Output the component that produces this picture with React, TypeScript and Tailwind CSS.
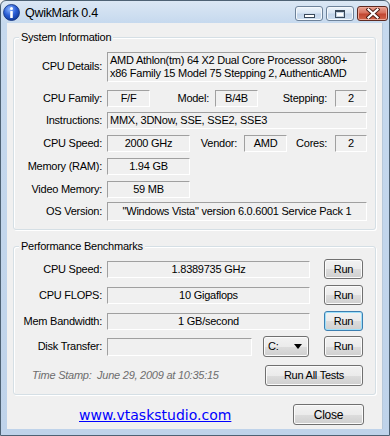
import type { ReactNode } from 'react';

const box =
  'border border-t-[#a0a0a0] border-l-[#a0a0a0] border-r-white border-b-white bg-[#f0f0f0] flex items-center whitespace-nowrap overflow-hidden shrink-0';

function Field({ className, children, left }: { className: string; children?: ReactNode; left?: boolean }) {
  return (
    <div className={`${box} ${left ? 'justify-start pl-[2px]' : 'justify-center'} ${className}`}>
      {children}
    </div>
  );
}

function Label({ className, children }: { className: string; children: ReactNode }) {
  return <div className={`text-right shrink-0 whitespace-nowrap ${className}`}>{children}</div>;
}

function Btn({ className, focused, children }: { className: string; focused?: boolean; children: ReactNode }) {
  return (
    <button
      className={`flex items-center justify-center shrink-0 rounded-[3px] border text-black bg-[linear-gradient(#f2f2f2_0%,#ebebeb_50%,#dddddd_50%,#cfcfcf_100%)] ${
        focused
          ? 'border-[#3c7fb1] shadow-[inset_0_0_0_1px_#9ee0fa]'
          : 'border-[#707070] shadow-[inset_0_0_0_1px_#fbfbfb]'
      } ${className}`}
    >
      {children}
    </button>
  );
}

function Group({ title, className, children }: { title: string; className: string; children: ReactNode }) {
  return (
    <div
      className={`relative ml-[6px] w-[363px] rounded-[3px] border border-[#d5dfe5] shadow-[inset_1px_1px_0_#ffffff,1px_1px_0_#ffffff] ${className}`}
    >
      <span className="absolute -top-[8px] left-[5px] bg-[#f0f0f0] px-[2px] leading-[14px] text-black">{title}</span>
      {children}
    </div>
  );
}

function InfoIcon() {
  return (
    <svg width="17" height="17" viewBox="0 0 17 17">
      <defs>
        <radialGradient id="ig" cx="40%" cy="30%" r="70%">
          <stop offset="0%" stopColor="#8fb8ff" />
          <stop offset="55%" stopColor="#2c5fd6" />
          <stop offset="100%" stopColor="#123c9c" />
        </radialGradient>
      </defs>
      <circle cx="8.5" cy="8.5" r="8" fill="url(#ig)" stroke="#0f2f7a" strokeWidth="0.8" />
      <circle cx="8.5" cy="4.6" r="1.5" fill="#fff" />
      <rect x="7.2" y="7" width="2.6" height="7" rx="0.6" fill="#fff" />
    </svg>
  );
}

function TitleButtons() {
  const glass =
    'h-[15px] rounded-[3px] border border-[#6d829a] bg-[linear-gradient(#eef4fb_0%,#d8e5f3_45%,#c2d4ea_55%,#cfdff0_100%)] shadow-[inset_0_0_0_1px_#f4f8fc] flex items-center justify-center';
  return (
    <div className="flex items-start gap-[2px] mt-[5px]">
      <div className={`${glass} w-[28px]`}>
        <div className="w-[11px] h-[4px] mt-[5px] border border-[#39495b] bg-white" />
      </div>
      <div className={`${glass} w-[28px] ml-[1px]`}>
        <div className="w-[10px] h-[8px] border border-[#39495b] border-t-2 bg-white shadow-[inset_0_0_0_1px_#c4d3e3]" />
      </div>
      <div className="h-[15px] w-[31px] ml-[1px] rounded-[3px] border border-[#5e2a22] bg-[linear-gradient(#e8a394_0%,#d7705c_45%,#c24631_55%,#d0664a_100%)] shadow-[inset_0_0_0_1px_#eea898] flex items-center justify-center">
        <svg width="14" height="11" viewBox="0 0 14 11">
          <path d="M2.5 1.5 L11.5 9.5 M11.5 1.5 L2.5 9.5" stroke="#4a1c15" strokeWidth="4" strokeLinecap="square" />
          <path d="M2.5 1.5 L11.5 9.5 M11.5 1.5 L2.5 9.5" stroke="#ffffff" strokeWidth="2.2" strokeLinecap="square" />
        </svg>
      </div>
    </div>
  );
}

export default function App() {
  return (
    <div className="w-[390px] h-[436px] overflow-hidden bg-[#f0f0f0]">
      <div className="w-[390px] h-[436px] flex flex-col rounded-t-[6px] border border-[#4e6274] bg-[linear-gradient(#dbe7f4_0px,#c6d9ee_22px,#bfd3ea_100%)] font-['Liberation_Sans',Arial,sans-serif] text-[11px] tracking-[-0.25px] text-black">
        {/* Title bar */}
        <div className="h-[22px] flex items-start shrink-0">
          <div className="ml-[2px] mt-[3px]">
            <InfoIcon />
          </div>
          <div className="ml-[5px] mt-[5px] text-[12.5px] leading-[15px] tracking-[-0.3px] text-black">QwikMark 0.4</div>
          <div className="ml-auto mr-[1px]">
            <TitleButtons />
          </div>
        </div>

        {/* Client area */}
        <div className="mx-[6px] h-[406px] shrink-0 bg-[#f0f0f0] border-r border-[#b7c8da] flex flex-col">
          <Group title="System Information" className="mt-[14px] h-[193px] pt-[14px]">
            <div className="flex items-start">
              <Label className="w-[88px] mt-[6px]">CPU Details:</Label>
              <Field left className="ml-[5px] w-[260px] h-[30px] !items-start">
                <div className="leading-[13px] pt-[1px]">
                  <div>AMD Athlon(tm) 64 X2 Dual Core Processor 3800+</div>
                  <div>x86 Family 15 Model 75 Stepping 2, AuthenticAMD</div>
                </div>
              </Field>
            </div>

            <div className="flex items-center mt-[8px] h-[17px]">
              <Label className="w-[88px]">CPU Family:</Label>
              <Field className="ml-[5px] w-[43px] h-[17px]">F/F</Field>
              <Label className="w-[59px]">Model:</Label>
              <Field className="ml-[6px] w-[43px] h-[17px]">B/4B</Field>
              <Label className="w-[69px]">Stepping:</Label>
              <Field className="ml-[8px] w-[32px] h-[17px]">2</Field>
            </div>

            <div className="flex items-center mt-[5px] h-[17px]">
              <Label className="w-[88px]">Instructions:</Label>
              <Field left className="ml-[5px] w-[260px] h-[17px]">MMX, 3DNow, SSE, SSE2, SSE3</Field>
            </div>

            <div className="flex items-center mt-[6px] h-[17px]">
              <Label className="w-[88px]">CPU Speed:</Label>
              <Field className="ml-[5px] w-[83px] h-[17px]">2000 GHz</Field>
              <Label className="w-[47px]">Vendor:</Label>
              <Field className="ml-[7px] w-[43px] h-[17px]">AMD</Field>
              <Label className="w-[40px]">Cores:</Label>
              <Field className="ml-[8px] w-[32px] h-[17px]">2</Field>
            </div>

            <div className="flex items-center mt-[6px] h-[17px]">
              <Label className="w-[88px]">Memory (RAM):</Label>
              <Field className="ml-[5px] w-[83px] h-[17px]">1.94 GB</Field>
            </div>

            <div className="flex items-center mt-[6px] h-[17px]">
              <Label className="w-[88px]">Video Memory:</Label>
              <Field className="ml-[5px] w-[83px] h-[17px]">59 MB</Field>
            </div>

            <div className="flex items-center mt-[4px] h-[19px]">
              <Label className="w-[88px]">OS Version:</Label>
              <Field className="ml-[5px] w-[260px] h-[19px]">"Windows Vista" version 6.0.6001 Service Pack 1</Field>
            </div>
          </Group>

          <Group title="Performance Benchmarks" className="mt-[16px] h-[149px] pt-[12px]">
            <div className="flex items-center h-[20px]">
              <Label className="w-[88px]">CPU Speed:</Label>
              <Field className="ml-[5px] w-[203px] h-[17px]">1.8389735 GHz</Field>
              <Btn className="ml-[14px] w-[39px] h-[20px]">Run</Btn>
            </div>

            <div className="flex items-center h-[20px] mt-[6px]">
              <Label className="w-[88px]">CPU FLOPS:</Label>
              <Field className="ml-[5px] w-[203px] h-[17px]">10 Gigaflops</Field>
              <Btn className="ml-[14px] w-[39px] h-[20px]">Run</Btn>
            </div>

            <div className="flex items-center h-[20px] mt-[6px]">
              <Label className="w-[88px]">Mem Bandwidth:</Label>
              <Field className="ml-[5px] w-[203px] h-[17px]">1 GB/second</Field>
              <Btn focused className="ml-[14px] w-[39px] h-[20px]">
                Run
              </Btn>
            </div>

            <div className="flex items-center h-[21px] mt-[5px]">
              <Label className="w-[88px]">Disk Transfer:</Label>
              <Field className="ml-[5px] w-[145px] h-[18px]" />
              <Btn className="ml-[11px] w-[46px] h-[21px] !justify-between px-[4px]">
                <span>C:</span>
                <svg width="8" height="5" viewBox="0 0 8 5" className="mr-[2px]">
                  <path d="M0 0 L8 0 L4 5 Z" fill="#000" />
                </svg>
              </Btn>
              <Btn className="ml-[15px] w-[39px] h-[21px]">Run</Btn>
            </div>

            <div className="flex items-center h-[21px] mt-[8px]">
              <div className="ml-[18px] italic text-[#6d6d6d] whitespace-nowrap">
                Time Stamp:&nbsp;&nbsp;June 29, 2009 at 10:35:15
              </div>
              <Btn className="ml-auto mr-[12px] w-[98px] h-[21px]">Run All Tests</Btn>
            </div>
          </Group>

          <div className="flex items-center mt-[9px] h-[21px]">
            <a className="ml-[72px] text-[14px] tracking-[0px] font-['DejaVu_Sans',Verdana,sans-serif] text-[#0000ff] underline leading-[16px]">
              www.vtaskstudio.com
            </a>
            <Btn className="ml-auto mr-[18px] w-[71px] h-[21px] text-[12px]">Close</Btn>
          </div>
        </div>
      </div>
    </div>
  );
}
